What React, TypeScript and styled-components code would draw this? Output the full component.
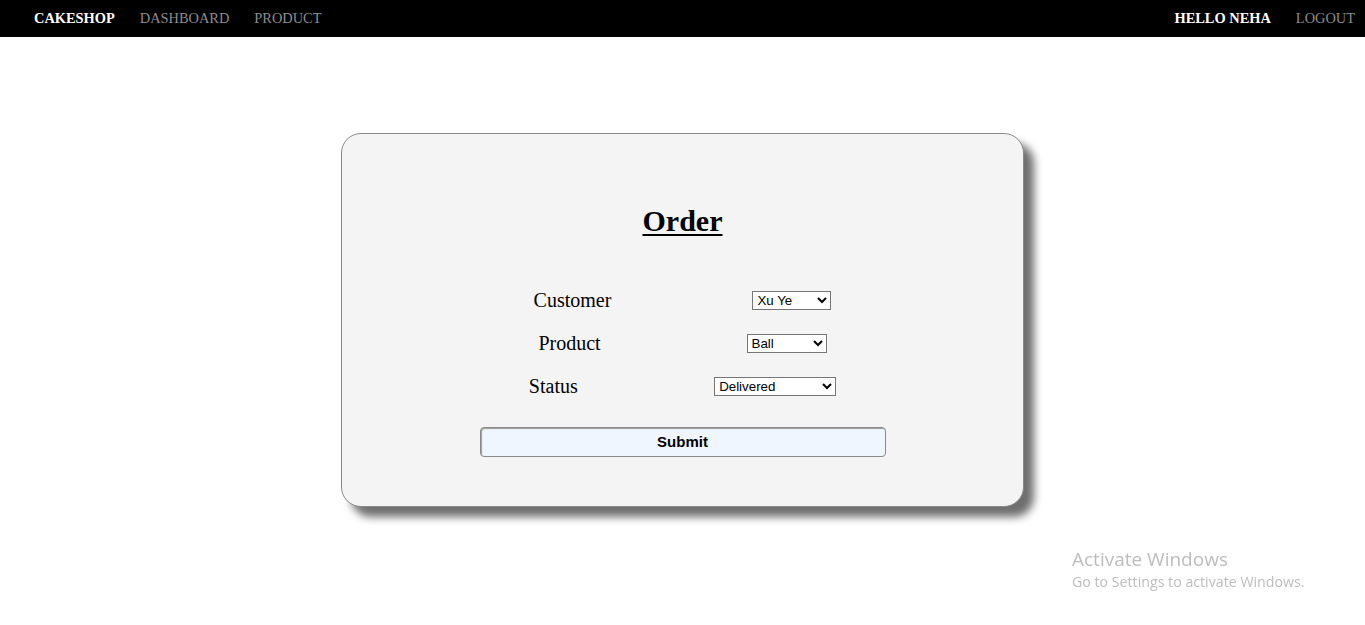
import React from "react";
import styled, { createGlobalStyle } from "styled-components";

const Global = createGlobalStyle`
  html, body { margin: 0; padding: 0; background: #ffffff; }
  body { font-family: "Liberation Serif", "Times New Roman", serif; }
`;

const Nav = styled.nav`
  height: 37px;
  background: #000;
  display: flex;
  align-items: center;
  justify-content: space-between;
  padding: 0 10px 0 34px;
  font-size: 14.4px;
`;

const NavGroup = styled.div`
  display: flex;
  align-items: center;
  gap: 25px;
`;

const NavItem = styled.span<{ $strong?: boolean }>`
  color: ${(p) => (p.$strong ? "#ffffff" : "#8c8c8c")};
  font-weight: ${(p) => (p.$strong ? 700 : 400)};
  cursor: pointer;
`;

const Main = styled.main`
  display: flex;
  justify-content: center;
  padding: 96px 0 60px;
`;

const Card = styled.form`
  box-sizing: border-box;
  width: 683px;
  height: 374px;
  background: #f4f4f4;
  border: 1px solid #8a8a8a;
  border-radius: 20px;
  box-shadow: 10px 10px 9px #6f6f6f;
  padding: 70px 50px 0;
  display: flex;
  flex-direction: column;
  align-items: center;
`;

const Title = styled.h2`
  margin: 0 0 51px;
  font-size: 30px;
  font-weight: 700;
  text-decoration: underline;
  text-decoration-thickness: 2px;
  text-underline-offset: 3px;
  color: #000;
`;

const Row = styled.div`
  width: 580px;
  display: flex;
  align-items: center;
  justify-content: space-evenly;
  margin-bottom: 20px;
`;

const Label = styled.label`
  font-size: 20px;
  color: #000;
`;

const Select = styled.select<{ $w: number }>`
  width: ${(p) => p.$w}px;
  height: 19px;
  box-sizing: border-box;
  font-family: Arial, "Liberation Sans", sans-serif;
  font-size: 13.333px;
  border: 1px solid #767676;
  border-radius: 0;
  background: #fff;
  color: #000;
  padding: 0;
`;

const Submit = styled.button`
  margin-top: 9px;
  width: 406px;
  height: 30px;
  box-sizing: border-box;
  background: #f0f6ff;
  border: 1px solid #8a8a8a;
  border-radius: 4px;
  box-shadow: inset 1px 1px 1px #9a9a9a;
  font-family: Arial, "Liberation Sans", sans-serif;
  font-size: 15px;
  font-weight: 700;
  color: #000;
  padding: 0 0 1px;
  cursor: pointer;
`;

const Watermark = styled.div`
  position: fixed;
  left: 1072px;
  top: 546px;
  font-family: "Open Sans", "Noto Sans", sans-serif;
  color: #bdbdbd;
  pointer-events: none;
`;

const WmTitle = styled.div`
  font-size: 19px;
  line-height: 26px;
`;

const WmSub = styled.div`
  font-size: 14.2px;
  line-height: 20px;
`;

export default function App() {
  return (
    <>
      <Global />
      <Nav>
        <NavGroup>
          <NavItem $strong>CAKESHOP</NavItem>
          <NavItem>DASHBOARD</NavItem>
          <NavItem>PRODUCT</NavItem>
        </NavGroup>
        <NavGroup>
          <NavItem $strong>HELLO NEHA</NavItem>
          <NavItem>LOGOUT</NavItem>
        </NavGroup>
      </Nav>
      <Main>
        <Card onSubmit={(e) => e.preventDefault()}>
          <Title>Order</Title>
          <Row>
            <Label>Customer</Label>
            <Select $w={79} defaultValue="Xu Ye">
              <option>Xu Ye</option>
            </Select>
          </Row>
          <Row>
            <Label>Product</Label>
            <Select $w={80} defaultValue="Ball">
              <option>Ball</option>
            </Select>
          </Row>
          <Row>
            <Label>Status</Label>
            <Select $w={122} defaultValue="Delivered">
              <option>Delivered</option>
              <option>Pending</option>
            </Select>
          </Row>
          <Submit type="submit">Submit</Submit>
        </Card>
      </Main>
      <Watermark>
        <WmTitle>Activate Windows</WmTitle>
        <WmSub>Go to Settings to activate Windows.</WmSub>
      </Watermark>
    </>
  );
}
